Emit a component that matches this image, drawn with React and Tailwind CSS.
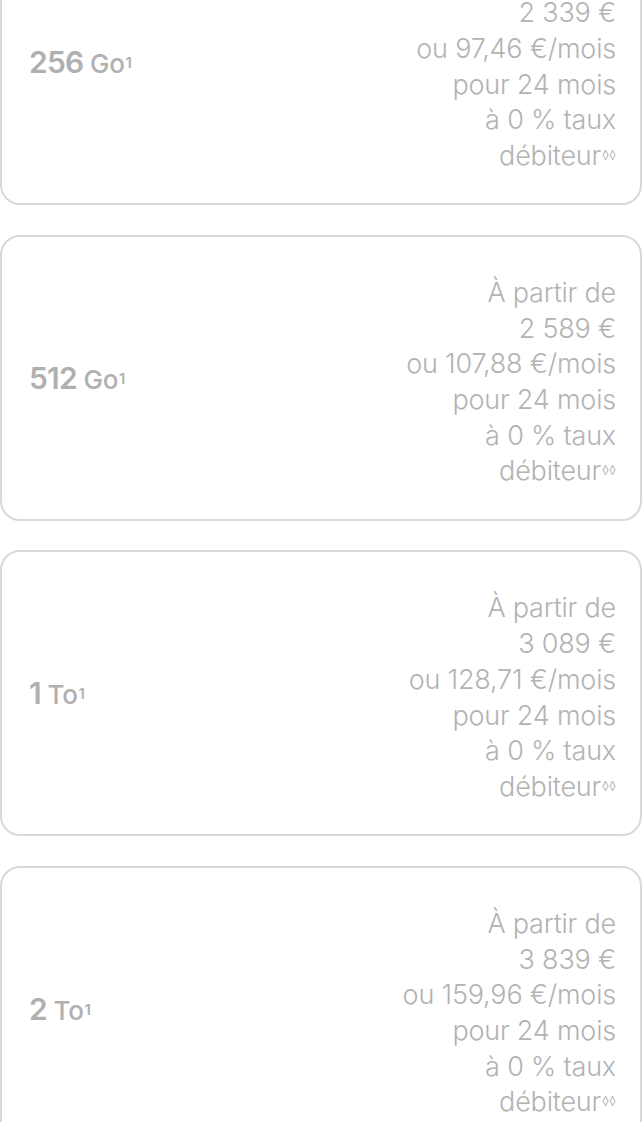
import React from "react";

const items = [
  { big: "256", unit: "Go", price: "2 339 €", month: "97,46" },
  { big: "512", unit: "Go", price: "2 589 €", month: "107,88" },
  { big: "1", unit: "To", price: "3 089 €", month: "128,71" },
  { big: "2", unit: "To", price: "3 839 €", month: "159,96" },
];

function Card({ it }) {
  return (
    <div className="h-[286px] w-full rounded-[20px] border-2 border-[#d9d9d9] bg-white flex items-center justify-between pl-[27px] pr-[24px]">
      <div className="text-[#b0b0b0] leading-none whitespace-nowrap">
        <span className="text-[30px] font-semibold tracking-[-0.8px]">{it.big}</span>
        <span className="text-[26px] font-medium tracking-[-0.3px]"> {it.unit}</span>
        <sup className="text-[15px] font-semibold relative top-[-5px] ml-[1px]">1</sup>
      </div>
      <div className="pt-[9px] text-right text-[#b3b3b3] text-[27px] leading-[35.7px] font-light tracking-[-0.2px] whitespace-nowrap">
        <div>À partir de</div>
        <div>{it.price}</div>
        <div>ou {it.month} €/mois</div>
        <div>pour 24 mois</div>
        <div>à 0 % taux</div>
        <div>
          débiteur<sup className="text-[13px] relative top-[-5px] ml-[1px] tracking-[0px]">◊◊</sup>
        </div>
      </div>
    </div>
  );
}

export default function App() {
  return (
    <div className="w-[642px] h-[1122px] overflow-hidden bg-white" style={{ fontFamily: "Inter, 'Noto Sans', sans-serif" }}>
      <div className="mt-[-81px] flex flex-col gap-[29.5px]">
        {items.map((it) => (
          <Card key={it.big} it={it} />
        ))}
      </div>
    </div>
  );
}
